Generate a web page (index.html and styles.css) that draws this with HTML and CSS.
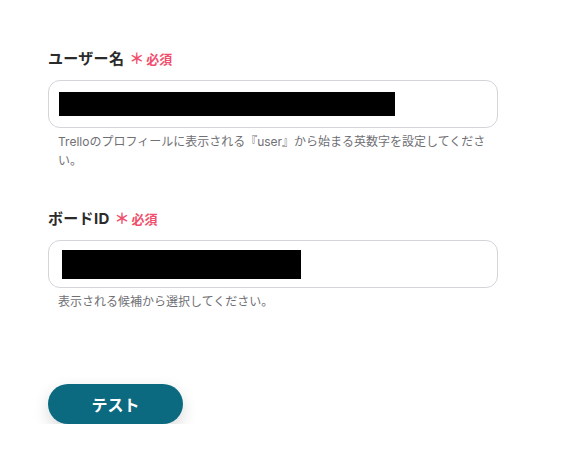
FILE: index.html
```html
<!DOCTYPE html>
<html lang="ja">
<head>
    <meta charset="UTF-8">
    <meta name="viewport" content="width=device-width, initial-scale=1.0">
    <title>Trello 設定</title>
    <link rel="stylesheet" href="styles.css">
</head>
<body>
    <div class="form">
        <div class="field">
            <div class="label">ユーザー名<span class="required"><span class="mark">＊</span>必須</span></div>
            <div class="input-box">
                <div class="masked masked-user"></div>
            </div>
            <p class="help">Trelloのプロフィールに表示される『user』から始まる英数字を設定してください。</p>
        </div>
        <div class="field field-board">
            <div class="label">ボードID<span class="required"><span class="mark">＊</span>必須</span></div>
            <div class="input-box">
                <div class="masked masked-board"></div>
            </div>
            <p class="help">表示される候補から選択してください。</p>
        </div>
        <button class="test-button">テスト</button>
    </div>
</body>
</html>
```

FILE: styles.css
```css
/* General */
body {
    margin: 0;
    padding: 0;
    background: #ffffff;
    font-family: "Inter", "Noto Sans CJK JP", sans-serif;
    color: #2b2b2b;
}

.form {
    padding: 48px 0 0 48px;
    width: 450px;
}

/* Fields */
.field-board {
    margin-top: 38px;
}

.label {
    font-size: 15px;
    font-weight: bold;
    line-height: 22px;
    margin-bottom: 10px;
    display: flex;
    align-items: center;
    letter-spacing: 0.3px;
}

.required {
    color: #f0506e;
    font-size: 13px;
    font-weight: bold;
    margin-left: 5px;
    display: flex;
    align-items: center;
    letter-spacing: 0;
}

.mark {
    font-size: 15px;
    margin-right: 2px;
}

.input-box {
    height: 48px;
    box-sizing: border-box;
    border: 1px solid #d3d5da;
    border-radius: 12px;
    padding: 10px 10px;
    display: flex;
    align-items: center;
}

.masked {
    background: #000000;
}

.masked-user {
    width: 336px;
    height: 24px;
}

.masked-board {
    width: 239px;
    height: 29px;
    margin-left: 3px;
}

.help {
    margin: 4px 0 0 0;
    padding-left: 10px;
    font-size: 12px;
    line-height: 19px;
    color: #707075;
}

/* Button */
.test-button {
    margin-top: 73px;
    width: 135px;
    height: 40px;
    border: none;
    border-radius: 20px;
    background-color: #0b6a80;
    color: #ffffff;
    font-family: "Inter", "Noto Sans CJK JP", sans-serif;
    font-size: 16px;
    font-weight: bold;
    box-shadow: 0 6px 16px rgba(0, 0, 0, 0.15);
    cursor: pointer;
}
```
